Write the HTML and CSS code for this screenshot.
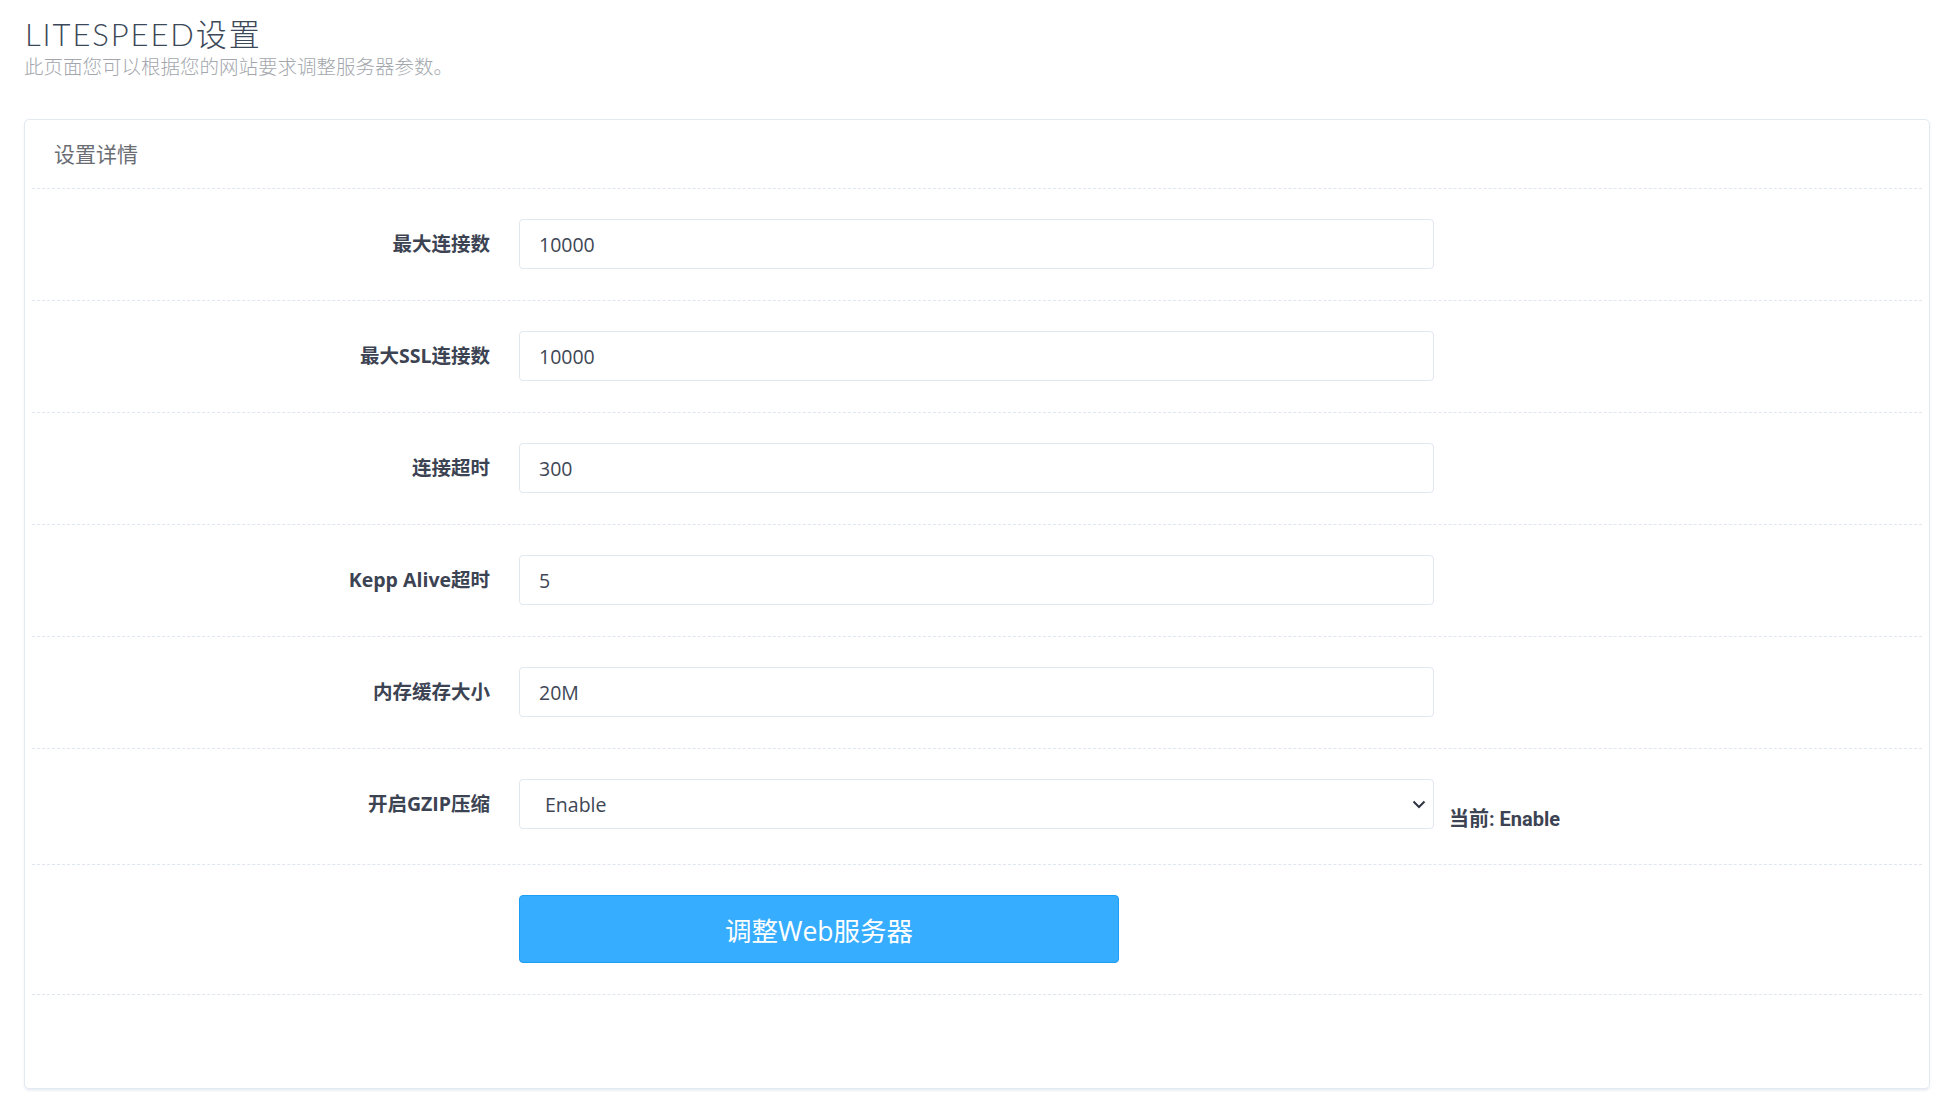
FILE: index.html
```html
<!DOCTYPE html>
<html lang="zh-CN">
<head>
  <meta charset="UTF-8" />
  <meta name="viewport" content="width=device-width, initial-scale=1.0"/>
  <title>LITESPEED设置</title>
  <link rel="stylesheet" href="styles.css">
</head>
<body>
  <div class="page">
    <div class="page-title">
      <h2>LITESPEED设置</h2>
      <p>此页面您可以根据您的网站要求调整服务器参数。</p>
    </div>

    <div class="panel">
      <h3 class="panel-title">设置详情</h3>

      <form class="settings">
        <div class="form-row">
          <label class="row-label">最大连接数</label>
          <div class="row-field"><input type="text" value="10000" /></div>
        </div>
        <div class="form-row">
          <label class="row-label">最大SSL连接数</label>
          <div class="row-field"><input type="text" value="10000" /></div>
        </div>
        <div class="form-row">
          <label class="row-label">连接超时</label>
          <div class="row-field"><input type="text" value="300" /></div>
        </div>
        <div class="form-row">
          <label class="row-label">Kepp Alive超时</label>
          <div class="row-field"><input type="text" value="5" /></div>
        </div>
        <div class="form-row">
          <label class="row-label">内存缓存大小</label>
          <div class="row-field"><input type="text" value="20M" /></div>
        </div>
        <div class="form-row">
          <label class="row-label">开启GZIP压缩</label>
          <div class="row-field select-wrap">
            <select>
              <option selected>Enable</option>
              <option>Disable</option>
            </select>
            <svg class="chevron" width="14" height="9" viewBox="0 0 14 9">
              <path d="M1.5 1.5 L7 7 L12.5 1.5" fill="none" stroke="#2f3542" stroke-width="2"/>
            </svg>
          </div>
          <div class="current">当前: Enable</div>
        </div>
        <div class="form-row">
          <div class="row-label"></div>
          <div class="row-button">
            <button type="button" class="submit-btn">调整Web服务器</button>
          </div>
        </div>
      </form>
    </div>
  </div>
</body>
</html>
```

FILE: styles.css
```css
* {
  margin: 0;
  padding: 0;
  box-sizing: border-box;
}

body {
  background: #fff;
  font-family: 'Open Sans', 'Noto Sans CJK SC', sans-serif;
  color: #3e4655;
}

.page {
  padding: 13px 24px 30px 24px;
}

.page-title h2 {
  font-family: 'Lato', 'Noto Sans CJK SC', sans-serif;
  font-weight: 300;
  font-size: 31px;
  line-height: 42px;
  letter-spacing: 1.9px;
  color: #3b4858;
  margin-left: 1px;
}

.page-title p {
  font-size: 19.5px;
  line-height: 24px;
  color: #a3a7ad;
  font-weight: 300;
}

.panel {
  margin-top: 40px;
  width: 1906px;
  height: 970px;
  border: 1px solid #e3e9f1;
  border-radius: 5px;
  box-shadow: 0 2px 2px rgba(200, 210, 225, 0.35);
  padding: 0 7px;
}

.panel-title {
  font-size: 21px;
  font-weight: 400;
  color: #6a6e74;
  height: 69px;
  line-height: 56px;
  padding: 6px 0 0 22px;
  border-bottom: 1px dashed #dfe6ef;
}

.form-row {
  display: flex;
  align-items: flex-start;
  padding: 30px 0 31px;
  border-bottom: 1px dashed #dfe6ef;
}

.row-label {
  width: 472px;
  padding-right: 14px;
  text-align: right;
  font-size: 19.5px;
  font-weight: 700;
  line-height: 50px;
  color: #3c4352;
  flex-shrink: 0;
}

.row-field {
  width: 945px;
  padding: 0 15px;
  flex-shrink: 0;
}

.row-field input,
.row-field select {
  width: 100%;
  height: 50px;
  border: 1px solid #e1e7f0;
  border-radius: 4px;
  background: #fff;
  font-family: 'Open Sans', sans-serif;
  font-size: 19.5px;
  color: #3e4655;
  padding: 0 19px;
  outline: none;
}

.select-wrap {
  position: relative;
}

.row-field select {
  appearance: none;
  -webkit-appearance: none;
  padding-left: 25px;
}

.chevron {
  position: absolute;
  right: 23px;
  top: 21px;
}

.current {
  padding-top: 26px;
  line-height: 28px;
  font-family: 'Roboto', 'Noto Sans CJK SC', sans-serif;
  font-weight: 700;
  font-size: 20px;
  color: #3c4352;
}

.row-button {
  padding: 0 15px;
}

.submit-btn {
  width: 600px;
  height: 68px;
  background: #36adfe;
  border: 1px solid #1c9df6;
  border-radius: 4px;
  color: #fff;
  font-family: 'Open Sans', 'Noto Sans CJK SC', sans-serif;
  font-size: 26.5px;
  cursor: pointer;
}
```
